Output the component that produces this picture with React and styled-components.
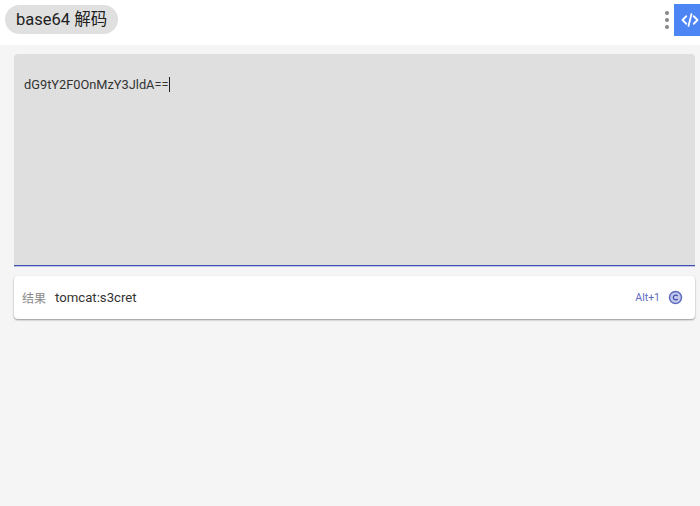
import React from 'react';
import styled, { createGlobalStyle } from 'styled-components';

const GlobalStyle = createGlobalStyle`
  html, body {
    margin: 0;
    padding: 0;
    background: #f5f5f5;
    font-family: Roboto, "Noto Sans CJK SC", sans-serif;
  }
`;

const Page = styled.div`
  width: 700px;
  height: 506px;
  overflow: hidden;
  background: #f5f5f5;
`;

const Header = styled.header`
  height: 45px;
  background: #fff;
  display: flex;
  align-items: flex-start;
  justify-content: space-between;
  padding: 4px 0 0 5px;
  box-sizing: border-box;
`;

const TitlePill = styled.div`
  height: 29px;
  line-height: 29px;
  margin-top: 1px;
  padding: 0 11px;
  border-radius: 15px;
  background: #e0e0e0;
  color: #212121;
  font-size: 16.5px;
`;

const Actions = styled.div`
  display: flex;
  align-items: flex-start;
`;

const MenuDots = styled.div`
  width: 14px;
  height: 32px;
  display: flex;
  flex-direction: column;
  align-items: center;
  justify-content: center;
  gap: 3px;
  span {
    width: 4px;
    height: 4px;
    border-radius: 50%;
    background: #858585;
  }
`;

const CodeButton = styled.div`
  width: 26px;
  height: 32px;
  padding-left: 7px;
  box-sizing: border-box;
  background: #4d85f5;
  color: #fff;
  display: flex;
  align-items: center;
`;

const Main = styled.main`
  padding: 9px 5px 0 14px;
  display: flex;
  flex-direction: column;
  gap: 10px;
`;

const InputArea = styled.div`
  height: 212px;
  box-sizing: border-box;
  background: #dfdfdf;
  border-radius: 4px 4px 0 0;
  border-bottom: 1px solid #3f51b5;
  box-shadow: 0 1px 0 rgba(63, 81, 181, 0.3);
  padding: 23px 10px 0;
  color: #333;
  font-size: 12.8px;
  line-height: 16px;
`;

const Caret = styled.span`
  display: inline-block;
  width: 1px;
  height: 15px;
  background: #222;
  vertical-align: -3px;
`;

const ResultCard = styled.div`
  height: 43px;
  background: #fff;
  border-radius: 4px;
  box-shadow: 0 1px 2px rgba(0, 0, 0, 0.4);
  display: flex;
  align-items: center;
  padding: 0 12px 0 8px;
`;

const ResultLabel = styled.span`
  color: #8a8a8a;
  font-size: 12px;
  margin-right: 9px;
`;

const ResultValue = styled.span`
  flex: 1;
  color: #333;
  font-size: 13.2px;
`;

const Shortcut = styled.span`
  color: #5c6bc0;
  font-size: 10.5px;
  margin-right: 8px;
`;

const CopyIcon = styled.svg`
  width: 15px;
  height: 15px;
  display: block;
`;

export default function App() {
  return (
    <Page>
      <GlobalStyle />
      <Header>
        <TitlePill>base64 解码</TitlePill>
        <Actions>
          <MenuDots>
            <span />
            <span />
            <span />
          </MenuDots>
          <CodeButton>
            <svg width="18" height="18" viewBox="0 0 24 24" fill="none" stroke="currentColor" strokeWidth="2.4" strokeLinecap="round" strokeLinejoin="round">
              <path d="M7 7l-5 5 5 5" />
              <path d="M17 7l5 5-5 5" />
              <path d="M14 4l-4 16" />
            </svg>
          </CodeButton>
        </Actions>
      </Header>
      <Main>
        <InputArea>
          dG9tY2F0OnMzY3JldA==<Caret />
        </InputArea>
        <ResultCard>
          <ResultLabel>结果</ResultLabel>
          <ResultValue>tomcat:s3cret</ResultValue>
          <Shortcut>Alt+1</Shortcut>
          <CopyIcon viewBox="0 0 15 15">
            <circle cx="7.5" cy="7.5" r="6" fill="#c5cae9" stroke="#5c6bc0" strokeWidth="1.5" />
            <path d="M9.6 6a2.4 2.4 0 1 0 0 3" fill="none" stroke="#3f51b5" strokeWidth="1.3" />
          </CopyIcon>
        </ResultCard>
      </Main>
    </Page>
  );
}
